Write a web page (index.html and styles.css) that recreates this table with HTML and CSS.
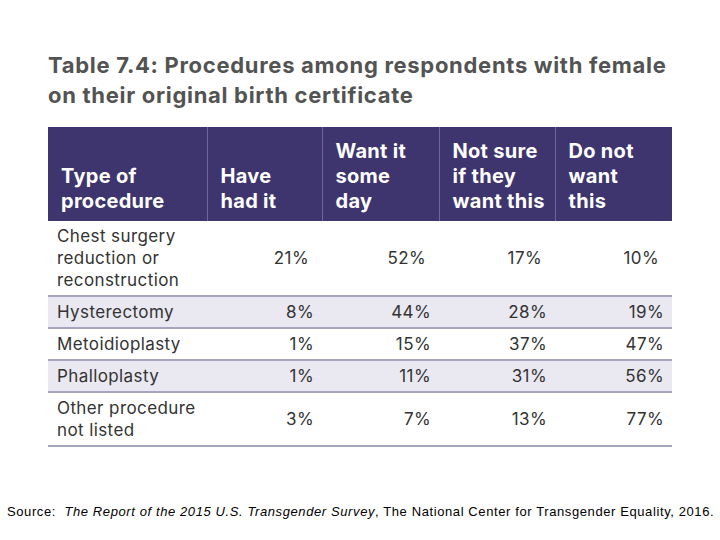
FILE: index.html
```html
<!DOCTYPE html>
<html>
<head>
<meta charset="utf-8">
<link rel="stylesheet" href="styles.css">
</head>
<body>
<div class="page">
  <h1 class="title">Table 7.4: Procedures among respondents with female<br>on their original birth certificate</h1>
  <table class="data">
    <colgroup>
      <col class="c1"><col class="c2"><col class="c3"><col class="c4"><col class="c5">
    </colgroup>
    <thead>
      <tr>
        <th>Type of<br>procedure</th>
        <th>Have<br>had it</th>
        <th>Want it<br>some<br>day</th>
        <th>Not sure<br>if they<br>want this</th>
        <th>Do not<br>want<br>this</th>
      </tr>
    </thead>
    <tbody>
      <tr class="first">
        <td>Chest surgery<br>reduction or<br>reconstruction</td>
        <td>21%</td><td>52%</td><td>17%</td><td>10%</td>
      </tr>
      <tr class="shade">
        <td>Hysterectomy</td>
        <td>8%</td><td>44%</td><td>28%</td><td>19%</td>
      </tr>
      <tr>
        <td>Metoidioplasty</td>
        <td>1%</td><td>15%</td><td>37%</td><td>47%</td>
      </tr>
      <tr class="shade">
        <td>Phalloplasty</td>
        <td>1%</td><td>11%</td><td>31%</td><td>56%</td>
      </tr>
      <tr>
        <td>Other procedure<br>not listed</td>
        <td>3%</td><td>7%</td><td>13%</td><td>77%</td>
      </tr>
    </tbody>
  </table>
  <p class="source">Source:&nbsp; <i>The Report of the 2015 U.S. Transgender Survey</i>, The National Center for Transgender Equality, 2016.</p>
</div>
</body>
</html>
```
FILE: styles.css
```css
html, body {
  margin: 0;
  padding: 0;
  background: #ffffff;
}
.page {
  width: 720px;
  height: 540px;
  position: relative;
}
.title {
  margin: 0;
  padding: 50px 0 0 48px;
  font-family: "Inter", "Liberation Sans", sans-serif;
  font-weight: 700;
  font-size: 22px;
  line-height: 30px;
  color: #535353;
  letter-spacing: 0.7px;
  white-space: nowrap;
}
.data {
  margin: 17px 0 0 48px;
  width: 624px;
  border-collapse: collapse;
  font-family: "Inter", "Liberation Sans", sans-serif;
  table-layout: fixed;
}
.c1 { width: 159px; }
.c2 { width: 115px; }
.c3 { width: 117px; }
.c4 { width: 116px; }
.c5 { width: 117px; }
.data thead tr {
  background: #3e356f;
}
.data th {
  color: #ffffff;
  font-weight: 700;
  font-size: 20px;
  line-height: 25px;
  letter-spacing: 0.3px;
  text-align: left;
  vertical-align: bottom;
  padding: 8px 8px 7px 13px;
  border-left: 1px solid #6c66a3;
  height: 79px;
}
.data th:first-child {
  border-left: none;
}
.data td {
  font-size: 17px;
  line-height: 22px;
  letter-spacing: 0.4px;
  color: #333333;
  padding: 4px 8px 4px 9px;
  text-align: right;
  border-bottom: 2px solid #a6a5be;
  vertical-align: middle;
}
.data td:first-child {
  text-align: left;
}
.data tr.first td {
  padding-right: 13px;
}
.data tr.first td:first-child {
  padding-right: 8px;
}
.data tr.shade td {
  background: #eae8f1;
}
.source {
  position: absolute;
  left: 7px;
  top: 503px;
  margin: 0;
  font-family: "Liberation Sans", sans-serif;
  font-size: 13px;
  line-height: 18px;
  color: #000000;
  letter-spacing: 0.6px;
  white-space: nowrap;
}
```
